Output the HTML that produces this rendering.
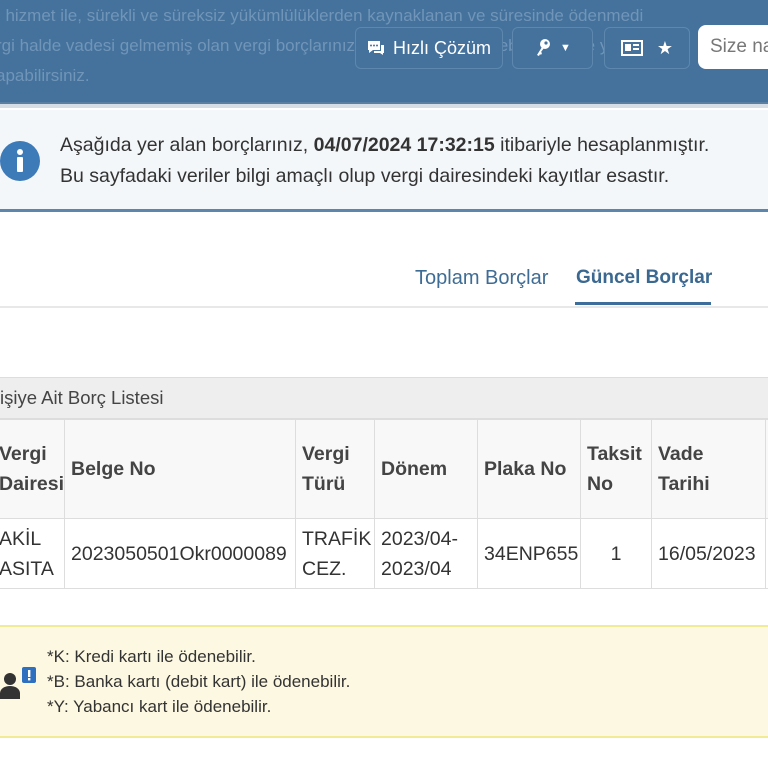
<!DOCTYPE html>
<html><head><meta charset="utf-8"><style>
*{margin:0;padding:0;box-sizing:border-box}
body{width:768px;height:768px;overflow:hidden;background:#fff;font-family:"Liberation Sans",sans-serif;position:relative;color:#333}
.hdr{position:absolute;left:0;top:0;width:768px;height:102px;background:#44729c;}
.hdr .t{position:absolute;left:-4px;color:#7195b8;font-size:17px;white-space:nowrap}
.sep{position:absolute;left:0;top:102px;width:768px;height:6px;background:#d6dde4;border-top:2px solid #5a7fa3}
.btn{position:absolute;top:27px;height:42px;border:1px solid #5d87ad;border-radius:6px;background:#44729c;color:#fff;font-size:18px;display:flex;align-items:center;justify-content:center;gap:8px}
.search{position:absolute;left:698px;top:25px;width:80px;height:44px;background:#fff;border-radius:8px;color:#777;font-size:19px;padding:11px 12px;white-space:nowrap;overflow:hidden}
.info{position:absolute;left:0;top:110px;width:768px;height:102px;background:#f4f7fa;border-bottom:3px solid #5d86ad}
.info p{position:absolute;left:60px;font-size:19.5px;color:#333;white-space:nowrap}
.tabs{position:absolute;top:267px;font-size:20px;color:#3f6c94;white-space:nowrap}
.line{position:absolute;left:0;top:306px;width:768px;height:2px;background:#e8e8e8}
.ph{position:absolute;left:0;top:377px;width:768px;height:42px;background:#eeeeee;border-top:1px solid #ddd;border-bottom:1px solid #ddd;font-size:18.5px;padding:9px 0 0 0;color:#444;white-space:nowrap}
table{position:absolute;left:-8px;top:419px;border-collapse:collapse;font-size:19.5px;color:#333;table-layout:fixed;width:793px}
td{border:1px solid #ddd;padding:0 6px;vertical-align:middle;line-height:30px;white-space:nowrap;overflow:hidden}
th{border:1px solid #ddd;padding:0 6px;text-align:left;font-weight:bold;color:#444;line-height:30px;height:99px;background:#f8f8f8;white-space:nowrap}
.y{position:absolute;left:0;top:625px;width:768px;height:113px;background:#fdf8e1;border-top:2px solid #f3ea96;border-bottom:2px solid #f3ea96}
.y p{position:absolute;left:47px;font-size:17px;color:#333;white-space:nowrap}
</style></head><body>
<div class="hdr">
<div class="t" style="top:6px">ı hizmet ile, sürekli ve süreksiz yükümlülüklerden kaynaklanan ve süresinde ödenmedi</div>
<div class="t" style="top:36px">rgi halde vadesi gelmemiş olan vergi borçlarınızı görüntüleyip ödeyebilir, ödeme yapabilir</div>
<div class="t" style="top:66px">apabilirsiniz.</div>
<div class="btn" style="left:355px;width:148px"><svg width="18" height="16" viewBox="0 0 18 16"><path d="M1 1h12v9H6l-4 3v-3H1z" fill="#fff"/><path d="M14 5h3v8h-1v2l-3-2H7v-2h7z" fill="#fff"/><circle cx="4" cy="5.5" r="1" fill="#44729c"/><circle cx="7" cy="5.5" r="1" fill="#44729c"/><circle cx="10" cy="5.5" r="1" fill="#44729c"/></svg>Hızlı Çözüm</div>
<div class="btn" style="left:512px;width:81px"><svg width="18" height="20" viewBox="0 0 18 20"><circle cx="11" cy="6" r="5" fill="#fff"/><circle cx="12" cy="5" r="1.6" fill="#44729c"/><path d="M8 9L3 17l2 1 1-2 1 1 1-2-1-1 3-4z" fill="#fff"/></svg><span style="font-size:11px">▼</span></div>
<div class="btn" style="left:604px;width:86px;gap:14px"><svg width="22" height="16" viewBox="0 0 22 16"><rect x="1" y="1" width="20" height="14" fill="none" stroke="#fff" stroke-width="2"/><rect x="4" y="4" width="6" height="7" fill="#fff"/><rect x="12" y="4" width="6" height="2" fill="#fff"/><rect x="12" y="8" width="6" height="2" fill="#fff"/></svg><span>★</span></div>
<div class="search">Size na</div>
</div>
<div class="sep"></div>
<div class="info">
<svg style="position:absolute;left:0;top:31px" width="40" height="40" viewBox="0 0 40 40"><circle cx="20" cy="20" r="20" fill="#3d7ab8"/><circle cx="20" cy="11" r="3" fill="#fff"/><rect x="17" y="16" width="6" height="15" rx="1" fill="#fff"/></svg>
<p style="top:24px">Aşağıda yer alan borçlarınız, <b>04/07/2024 17:32:15</b> itibariyle hesaplanmıştır.</p>
<p style="top:55px">Bu sayfadaki veriler bilgi amaçlı olup vergi dairesindeki kayıtlar esastır.</p>
</div>
<div class="tabs" style="left:415px">Toplam Borçlar</div>
<div class="tabs" style="left:576px;font-weight:bold;color:#3a6891;font-size:19px">Güncel Borçlar</div>
<div style="position:absolute;left:575px;top:302px;width:136px;height:3px;background:#3d6d9a"></div>
<div class="line"></div>
<div class="ph">işiye Ait Borç Listesi</div>
<table>
<colgroup><col style="width:72px"><col style="width:231px"><col style="width:79px"><col style="width:103px"><col style="width:103px"><col style="width:71px"><col style="width:114px"><col style="width:20px"></colgroup>
<tr><th>Vergi<br>Dairesi</th><th>Belge No</th><th>Vergi<br>Türü</th><th>Dönem</th><th>Plaka No</th><th>Taksit<br>No</th><th>Vade<br>Tarihi</th><th></th></tr>
<tr style="height:70px"><td>AKİL<br>ASITA</td><td>2023050501Okr0000089</td><td>TRAFİK<br>CEZ.</td><td>2023/04-<br>2023/04</td><td>34ENP655</td><td style="text-align:center">1</td><td>16/05/2023</td><td></td></tr>
</table>
<div class="y">
<svg style="position:absolute;left:0;top:38px" width="40" height="36" viewBox="0 0 40 36"><circle cx="10" cy="14" r="6" fill="#333"/><path d="M0 34v-6a10 7 0 0 1 20 0v6z" fill="#333"/><rect x="22" y="2" width="14" height="16" rx="2" fill="#2e6fc0"/><rect x="28" y="5" width="2.4" height="7" fill="#fff"/><rect x="28" y="13" width="2.4" height="2.4" fill="#fff"/></svg>
<p style="top:20px">*K: Kredi kartı ile ödenebilir.</p>
<p style="top:45px">*B: Banka kartı (debit kart) ile ödenebilir.</p>
<p style="top:70px">*Y: Yabancı kart ile ödenebilir.</p>
</div>
</body></html>
